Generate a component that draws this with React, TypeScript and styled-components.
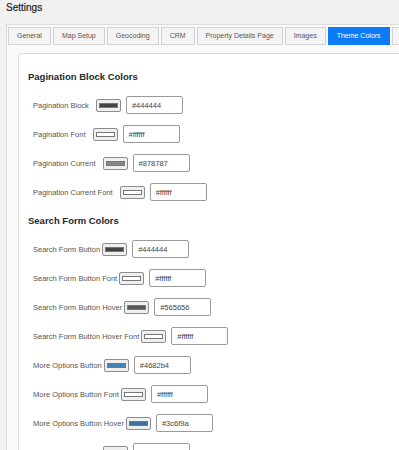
import * as React from 'react';
import styled, { createGlobalStyle } from 'styled-components';

const GlobalStyle = createGlobalStyle`
  html, body {
    margin: 0;
    overflow: hidden;
    background: #f1f1f1;
    font-family: "Liberation Sans", Arial, sans-serif;
  }
`;

const Page = styled.div`
  width: 560px;
  padding: 2px 0 0 6px;
`;

const Title = styled.h1`
  margin: 0;
  font-size: 10px;
  line-height: 12px;
  font-weight: 400;
  color: #1d2327;
  -webkit-text-stroke: 0.2px #1d2327;
`;

const Panel = styled.div`
  margin-top: 10px;
  border: 1px solid #dcdcdc;
  background: #f9f9f9;
  padding: 2px 0 0 1px;
`;

const TabBar = styled.div`
  display: flex;
  gap: 2px;
`;

const Tab = styled.div<{ $active?: boolean }>`
  height: 18px;
  box-sizing: border-box;
  padding: 0 8px;
  border: 1px solid ${p => (p.$active ? '#0b7bf7' : '#d2d2d2')};
  background: ${p => (p.$active ? '#0b7bf7' : '#f4f4f4')};
  color: ${p => (p.$active ? '#ffffff' : '#555555')};
  font-size: 7px;
  line-height: 16px;
  white-space: nowrap;
`;

const Card = styled.div`
  margin: 8px 0 0 10px;
  background: #ffffff;
  border: 1px solid #dcdcdc;
  border-radius: 4px;
  padding: 16px 9px 60px;
`;

const Section = styled.section`
  & + & {
    margin-top: 13px;
  }
`;

const Heading = styled.h2`
  margin: 0;
  font-size: 9.5px;
  line-height: 14px;
  font-weight: 700;
  color: #23282d;
`;

const Rows = styled.div<{ $labelGap: number }>`
  margin-top: 12px;
  padding-left: 5px;
  display: flex;
  flex-direction: column;
  gap: 11px;

  & > div > span:first-child {
    margin-right: ${p => p.$labelGap}px;
  }
`;

const Row = styled.div`
  display: flex;
  align-items: center;
  height: 18px;
`;

const Label = styled.span`
  font-size: 7.5px;
  color: #555555;
  white-space: nowrap;
`;

const Swatch = styled.span`
  display: block;
  width: 25px;
  height: 13px;
  box-sizing: border-box;
  border: 1px solid #8d8d8d;
  border-radius: 2px;
  background: #efefef;
  padding: 3px 2px;
  margin-right: 5px;
`;

const SwatchFill = styled.span<{ $color: string }>`
  display: block;
  width: 100%;
  height: 100%;
  box-sizing: border-box;
  border: 1px solid #777777;
  background: ${p => p.$color};
`;

const HexInput = styled.input`
  width: 57px;
  height: 18px;
  box-sizing: border-box;
  border: 1px solid #9a9a9a;
  border-radius: 2px;
  padding: 0 5px;
  background: #ffffff;
  font-family: inherit;
  font-size: 7.5px;
  color: #444444;
  outline: none;
`;

const tabs = ['General', 'Map Setup', 'Geocoding', 'CRM', 'Property Details Page', 'Images', 'Theme Colors', 'Advanced'];

const sections = [
  {
    title: 'Pagination Block Colors',
    labelGap: 7,
    rows: [
      ['Pagination Block', '#444444'],
      ['Pagination Font', '#ffffff'],
      ['Pagination Current', '#878787'],
      ['Pagination Current Font', '#ffffff'],
    ],
  },
  {
    title: 'Search Form Colors',
    labelGap: 2,
    rows: [
      ['Search Form Button', '#444444'],
      ['Search Form Button Font', '#ffffff'],
      ['Search Form Button Hover', '#565656'],
      ['Search Form Button Hover Font', '#ffffff'],
      ['More Options Button', '#4682b4'],
      ['More Options Button Font', '#ffffff'],
      ['More Options Button Hover', '#3c6f9a'],
      ['Search Again Button', '#444444'],
      ['Search Again Button Font', '#ffffff'],
    ],
  },
];

const ColorRow = ({ label, value }: { label: string; value: string }) => (
  <Row>
    <Label>{label}</Label>
    <Swatch>
      <SwatchFill $color={value} />
    </Swatch>
    <HexInput readOnly value={value} />
  </Row>
);

const App = () => (
  <Page>
    <GlobalStyle />
    <Title>Settings</Title>
    <Panel>
      <TabBar>
        {tabs.map(t => (
          <Tab key={t} $active={t === 'Theme Colors'}>{t}</Tab>
        ))}
      </TabBar>
      <Card>
        {sections.map(s => (
          <Section key={s.title}>
            <Heading>{s.title}</Heading>
            <Rows $labelGap={s.labelGap}>
              {s.rows.map(([label, value]) => (
                <ColorRow key={label} label={label} value={value} />
              ))}
            </Rows>
          </Section>
        ))}
      </Card>
    </Panel>
  </Page>
);

export default App;
